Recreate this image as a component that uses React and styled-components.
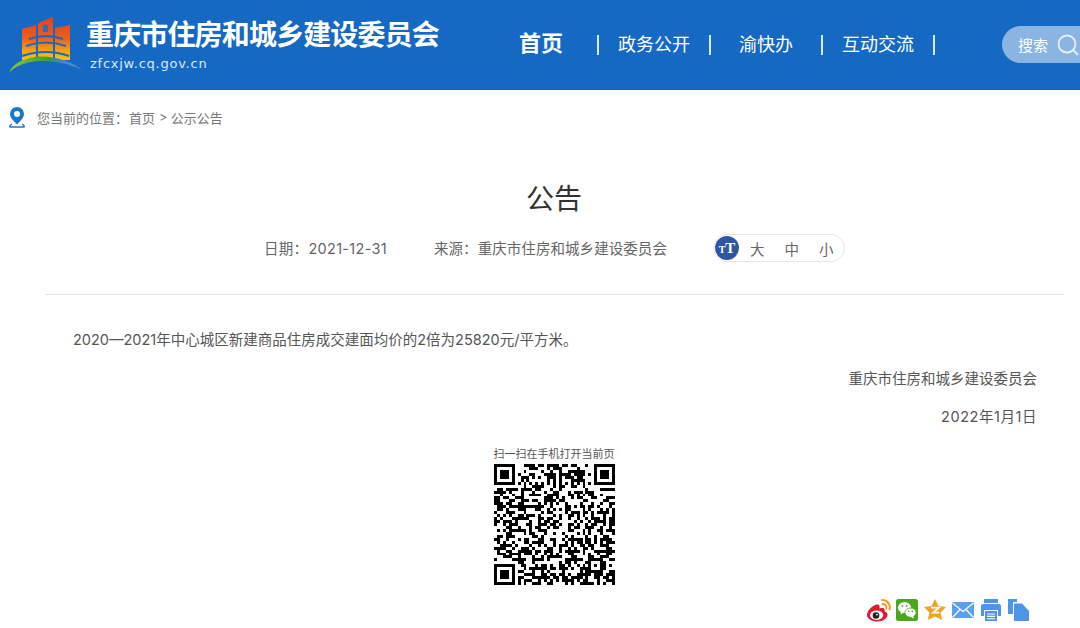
import React from 'react'
import styled, { createGlobalStyle } from 'styled-components'

const GlobalStyle = createGlobalStyle`
  html, body {
    margin: 0;
    padding: 0;
    background: #fff;
    overflow: hidden;
  }
  body {
    width: 1080px;
    height: 628px;
    font-family: Inter, "Noto Sans CJK SC", "Liberation Sans", sans-serif;
    color: #555;
  }
`

const Page = styled.div`
  width: 1080px;
  height: 628px;
  overflow: hidden;
`

const Header = styled.header`
  height: 90px;
  background: #1569c3;
  display: flex;
  align-items: center;
  overflow: hidden;
`

const Brand = styled.div`
  width: 485px;
  flex: none;
  display: flex;
  align-items: center;
  padding-left: 9px;
  box-sizing: border-box;
`

const BrandText = styled.div`
  margin-left: 1px;
  display: flex;
  flex-direction: column;
  color: #fff;
`

const BrandName = styled.div`
  font-size: 28px;
  line-height: 34px;
  font-weight: 700;
  letter-spacing: -0.85px;
  white-space: nowrap;
`

const BrandUrl = styled.div`
  font-family: "DejaVu Sans", sans-serif;
  font-size: 13px;
  line-height: 16px;
  letter-spacing: 0.75px;
  padding-left: 4px;
  margin-top: 4px;
  color: #dbe8f6;
`

const Nav = styled.nav`
  display: flex;
  align-items: center;
  flex: none;
`

const NavItem = styled.a`
  color: #fff;
  white-space: nowrap;
  text-align: center;
  width: ${p => p.$width}px;
  font-size: ${p => (p.$active ? 22 : 18)}px;
  font-weight: ${p => (p.$active ? 700 : 400)};
  line-height: 30px;
  margin-bottom: ${p => (p.$active ? 4 : 0)}px;
`

const NavBar = styled.i`
  width: 2px;
  height: 20px;
  flex: none;
  background: #dbe8f6;
`

const Search = styled.div`
  margin: 0 0 1px 67px;
  width: 100px;
  height: 37px;
  flex: none;
  box-sizing: border-box;
  padding-left: 16px;
  border-radius: 19px;
  background: #8ab4e2;
  display: flex;
  align-items: center;
  gap: 8px;
  color: #fff;
  font-size: 15px;
`

const Crumbs = styled.div`
  height: 54px;
  padding-left: 8px;
  display: flex;
  align-items: center;
  font-size: 13px;
  color: #777;
`

const CrumbLabel = styled.span`
  margin-left: 11px;
  width: 92px;
`

const CrumbArrow = styled.span`
  margin: 0 3px 0 4px;
`

const Article = styled.main`
  display: flex;
  flex-direction: column;
`

const Title = styled.h1`
  margin: 35px 0 0;
  padding-left: 28px;
  text-align: center;
  font-size: 28px;
  line-height: 40px;
  font-weight: 400;
  color: #333;
`

const Meta = styled.div`
  margin-top: 12px;
  height: 32px;
  padding-left: 264px;
  display: flex;
  align-items: center;
  font-size: 14.5px;
  color: #666;
`

const MetaDate = styled.span`
  width: 170px;
  letter-spacing: 0.3px;
`

const MetaSource = styled.span`
  width: 279px;
  letter-spacing: 0.06px;
`

const SizeSwitch = styled.div`
  width: 132px;
  height: 28px;
  margin-top: 2px;
  box-sizing: border-box;
  border: 1px solid #e6e6e6;
  border-radius: 14px;
  display: flex;
  align-items: center;
  color: #666;
  font-size: 14.5px;
`

const SizeBadge = styled.span`
  width: 24px;
  height: 24px;
  flex: none;
  margin-left: 1px;
  margin-right: 11px;
  border-radius: 50%;
  background: #2f55a4;
  color: #fff;
  display: flex;
  align-items: center;
  justify-content: center;
  font-family: "Liberation Serif", serif;
  font-weight: 700;
  font-size: 15px;
`

const SizeSmallT = styled.span`
  font-size: 10px;
  line-height: 15px;
  align-self: flex-end;
  margin-bottom: 3px;
`

const SizeOption = styled.span`
  width: 34.5px;
  flex: none;
`

const Divider = styled.hr`
  margin: 31px 16px 0 45px;
  height: 1px;
  border: 0;
  background: #e4e4e4;
`

const Paragraph = styled.p`
  margin: ${p => p.$top}px 43px 0 ${p => (p.$right ? 72 : 73)}px;
  height: 20px;
  font-size: 14.5px;
  line-height: 20px;
  color: #555;
  text-align: ${p => (p.$right ? 'right' : 'left')};
  letter-spacing: ${p => p.$spacing || 0}px;
`

const QrBlock = styled.div`
  margin-top: 20px;
  padding-left: 28px;
  display: flex;
  flex-direction: column;
  align-items: center;
`

const QrCaption = styled.div`
  font-size: 11px;
  line-height: 14px;
  color: #555;
`

const QrImage = styled.svg`
  display: block;
  margin-top: 3px;
  shape-rendering: crispEdges;
`

const Share = styled.div`
  margin-top: 13px;
  padding-left: 867px;
  display: flex;
  align-items: center;
  gap: 4px;
`

const ShareIcon = styled.svg`
  display: block;
  width: 24px;
  height: 24px;
  flex: none;
`

const Logo = () => (
  <svg width="76" height="60" viewBox="0 0 76 60" style={{ flex: 'none' }}>
    <defs>
      <linearGradient id="tower" gradientUnits="userSpaceOnUse" x1="0" y1="2" x2="0" y2="45">
        <stop offset="0" stopColor="#e2411f" />
        <stop offset="0.5" stopColor="#ec5f1d" />
        <stop offset="0.75" stopColor="#f59a14" />
        <stop offset="1" stopColor="#fcc60c" />
      </linearGradient>
      <linearGradient id="swoosh" x1="0" y1="0" x2="1" y2="0">
        <stop offset="0" stopColor="#8cc63f" />
        <stop offset="0.55" stopColor="#3a9a3c" />
        <stop offset="0.68" stopColor="#3a86c6" />
        <stop offset="1" stopColor="#5a8fc8" />
      </linearGradient>
    </defs>
    <path d="M13 14 L27 10 V45 H13 Z" fill="url(#tower)" />
    <path d="M29 8 L44 2 V45 H29 Z" fill="url(#tower)" />
    <path d="M46 13 L61 10 V45 H46 Z" fill="url(#tower)" />
    <path d="M34 17 V12 a2.5 2.5 0 0 1 5 0 V17 Z" fill="#2a6db8" />
    <path d="M20 24 Q37 18 54 24 M17 31 Q37 24 57 31 M13 41 Q37 33 60 41" stroke="#1569c3" strokeWidth="2" fill="none" />
    <path d="M0 58 C4 48 14 44 26 42 C44 40 62 46 73 55 C60 48 44 46 30 46 C16 47 6 51 0 58 Z" fill="url(#swoosh)" />
  </svg>
)

const Pin = () => (
  <svg width="18" height="22" viewBox="0 0 18 22">
    <path d="M9 1 a7 7 0 0 1 7 7 c0 4-4 7-7 10.5 C6 15 2 12 2 8 a7 7 0 0 1 7-7 Z" fill="#1a76c6" />
    <circle cx="9" cy="8" r="3" fill="#fff" />
    <path d="M4 18 Q1 20 2 21 H16 Q17 20 14 18" fill="none" stroke="#1a76c6" strokeWidth="1.4" />
  </svg>
)

const SearchGlass = () => (
  <svg width="24" height="24" viewBox="0 0 24 24" fill="none" stroke="#e6eff9" strokeWidth="1.8">
    <circle cx="11" cy="11" r="8.5" />
    <path d="M17 17 L22 22" />
  </svg>
)

const QR_SIZE = 41

const inFinder = (x, y) =>
  (x < 8 && y < 8) || (x >= QR_SIZE - 8 && y < 8) || (x < 8 && y >= QR_SIZE - 8)

const finderCell = (x, y) => {
  const fx = x >= QR_SIZE - 8 ? x - (QR_SIZE - 7) : x
  const fy = y >= QR_SIZE - 8 ? y - (QR_SIZE - 7) : y
  if (fx < 0 || fy < 0 || fx > 6 || fy > 6) return false
  const ring = fx === 0 || fx === 6 || fy === 0 || fy === 6
  const core = fx >= 2 && fx <= 4 && fy >= 2 && fy <= 4
  return ring || core
}

// seeded noise so the code comes out the same on every render
const buildQr = () => {
  let seed = 20211231
  const next = () => {
    seed = (seed * 1664525 + 1013904223) >>> 0
    return seed / 4294967296
  }
  const cells = []
  for (let y = 0; y < QR_SIZE; y++) {
    for (let x = 0; x < QR_SIZE; x++) {
      let on
      if (inFinder(x, y)) on = finderCell(x, y)
      else if (y === 6) on = x % 2 === 0
      else if (x === 6) on = y % 2 === 0
      else if (x >= 32 && x <= 36 && y >= 32 && y <= 36) {
        on = x === 32 || x === 36 || y === 32 || y === 36 || (x === 34 && y === 34)
      } else on = next() > 0.5
      if (on) cells.push([x, y])
    }
  }
  return cells
}

const qrCells = buildQr()

const Weibo = () => (
  <ShareIcon viewBox="0 0 24 24">
    <path d="M9.5 6.5 C4.5 8 0 13 0 17 C0 21 5 23.5 10.5 23.5 C16.5 23.5 20.5 20 20.5 16.5 C20.5 14.5 18.5 13.8 17.5 13.4 C18.3 11 17 9.5 14.5 10 L12.5 10.6 C13 7.5 12 6 9.5 6.5 Z" fill="#e6162d" />
    <ellipse cx="9.6" cy="17.2" rx="6.6" ry="4.8" fill="#fff" />
    <circle cx="9" cy="17.5" r="3.3" fill="#222" />
    <circle cx="10" cy="16.6" r="0.9" fill="#fff" />
    <path d="M15 2 C19.5 1.5 24 6 22.6 11.5 M15.5 6 C18 5.8 19.8 8 19.2 10.5" fill="none" stroke="#f59a1c" strokeWidth="2" strokeLinecap="round" />
  </ShareIcon>
)

const Wechat = () => (
  <ShareIcon viewBox="0 0 24 24">
    <rect x="1" y="1" width="22" height="22" rx="2.5" fill="#4aa61b" />
    <ellipse cx="9.5" cy="9.5" rx="6.6" ry="5.4" fill="#fff" />
    <path d="M6 13 L5.6 16.6 L9 14.4 Z" fill="#fff" />
    <ellipse cx="15.5" cy="14.6" rx="5.6" ry="4.6" fill="#fff" stroke="#4aa61b" strokeWidth="0.8" />
    <path d="M18 17.6 L19 20.4 L15.6 18.8 Z" fill="#fff" />
    <circle cx="7.4" cy="8" r="0.9" fill="#4aa61b" />
    <circle cx="11.6" cy="8" r="0.9" fill="#4aa61b" />
    <circle cx="13.7" cy="13.4" r="0.8" fill="#4aa61b" />
    <circle cx="17.3" cy="13.4" r="0.8" fill="#4aa61b" />
  </ShareIcon>
)

const Qzone = () => (
  <ShareIcon viewBox="0 0 24 24">
    <path d="M12 1 L15.4 8 L23 9 L17.6 14.4 L19.2 22 L12 18.4 L4.8 22 L6.4 14.4 L1 9 L8.6 8 Z" fill="#f2a31c" />
    <path d="M8 9.6 H16 L10.4 14.6 H16.4" fill="none" stroke="#fff" strokeWidth="1.9" />
  </ShareIcon>
)

const Mail = () => (
  <ShareIcon viewBox="0 0 24 24">
    <rect x="1" y="4" width="22" height="16" rx="1" fill="#5a9ff0" />
    <path d="M1.5 5 L12 13.5 L22.5 5 M1.5 19.5 L9 11.5 M22.5 19.5 L15 11.5" fill="none" stroke="#fff" strokeWidth="1.2" />
  </ShareIcon>
)

const Printer = () => (
  <ShareIcon viewBox="0 0 24 24">
    <rect x="5" y="1" width="14" height="4" fill="#4d94ea" />
    <path d="M2 8 a2 2 0 0 1 2-2 H20 a2 2 0 0 1 2 2 V18 H19 V12 H5 V18 H2 Z" fill="#4d94ea" />
    <rect x="6" y="13" width="12" height="10" fill="#4d94ea" />
    <path d="M8 16 H16 M8 18.4 H16 M8 20.8 H16" stroke="#fff" strokeWidth="1.1" />
  </ShareIcon>
)

const Copy = () => (
  <ShareIcon viewBox="0 0 24 24">
    <path d="M1 1 H10 V4 H6 V16 H1 Z" fill="#4d94ea" />
    <path d="M7 5.5 H15 L22 13 V23 H7 Z" fill="#4d94ea" />
  </ShareIcon>
)

const App = () => (
  <Page>
    <GlobalStyle />
    <Header>
      <Brand>
        <Logo />
        <BrandText>
          <BrandName>重庆市住房和城乡建设委员会</BrandName>
          <BrandUrl>zfcxjw.cq.gov.cn</BrandUrl>
        </BrandText>
      </Brand>
      <Nav>
        <NavItem $active $width={112}>首页</NavItem>
        <NavBar />
        <NavItem $width={110}>政务公开</NavItem>
        <NavBar />
        <NavItem $width={110}>渝快办</NavItem>
        <NavBar />
        <NavItem $width={110}>互动交流</NavItem>
        <NavBar />
      </Nav>
      <Search>
        搜索
        <SearchGlass />
      </Search>
    </Header>

    <Crumbs>
      <Pin />
      <CrumbLabel>您当前的位置：</CrumbLabel>
      <span>首页</span>
      <CrumbArrow>&gt;</CrumbArrow>
      <span>公示公告</span>
    </Crumbs>

    <Article>
      <Title>公告</Title>
      <Meta>
        <MetaDate>日期：2021-12-31</MetaDate>
        <MetaSource>来源：重庆市住房和城乡建设委员会</MetaSource>
        <SizeSwitch>
          <SizeBadge>
            <SizeSmallT>T</SizeSmallT>T
          </SizeBadge>
          <SizeOption>大</SizeOption>
          <SizeOption>中</SizeOption>
          <SizeOption>小</SizeOption>
        </SizeSwitch>
      </Meta>
      <Divider />
      <Paragraph $top={35}>2020—2021年中心城区新建商品住房成交建面均价的2倍为25820元/平方米。</Paragraph>
      <Paragraph $top={19} $right>重庆市住房和城乡建设委员会</Paragraph>
      <Paragraph $top={18} $right $spacing={0.55}>2022年1月1日</Paragraph>
      <QrBlock>
        <QrCaption>扫一扫在手机打开当前页</QrCaption>
        <QrImage width="121" height="121" viewBox="0 0 41 41">
          {qrCells.map(([x, y]) => (
            <rect key={`${x}-${y}`} x={x} y={y} width="1" height="1" fill="#000" />
          ))}
        </QrImage>
      </QrBlock>
      <Share>
        <Weibo />
        <Wechat />
        <Qzone />
        <Mail />
        <Printer />
        <Copy />
      </Share>
    </Article>
  </Page>
)

export default App
